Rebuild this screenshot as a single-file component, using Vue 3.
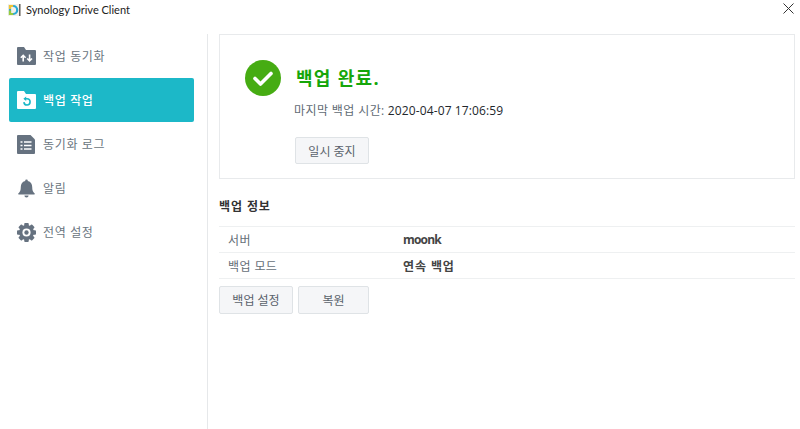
<script setup>
const navItems = [
  { label: '작업 동기화', icon: 'sync' },
  { label: '백업 작업', icon: 'backup', active: true },
  { label: '동기화 로그', icon: 'log' },
  { label: '알림', icon: 'bell' },
  { label: '전역 설정', icon: 'gear' },
]
const rows = [
  { key: '서버', value: 'moonk', latin: true },
  { key: '백업 모드', value: '연속 백업' },
]
</script>

<template>
  <div class="window">
    <header class="titlebar">
      <svg class="logo" width="13" height="12" viewBox="0 0 13 12">
        <rect x="0" y="0" width="13" height="12" fill="#f3f1ea" />
        <path d="M2 2h3.200a4 4 0 0 1 0 8H2z" fill="none" stroke="#27a9d6" stroke-width="2.200" />
        <path d="M2 6.500V10h3.200" fill="none" stroke="#9acb3c" stroke-width="2.200" />
        <path d="M2 5V2h3.200" fill="none" stroke="#f2c230" stroke-width="2.200" />
        <path d="M11.800 0v12" stroke="#444" stroke-width="1.200" />
      </svg>
      <span class="title">Synology Drive Client</span>
      <svg class="close" width="11" height="11" viewBox="0 0 11 11">
        <path d="M0.500 0.500l10 10M10.500 0.500l-10 10" stroke="#333" stroke-width="1" fill="none" />
      </svg>
    </header>

    <div class="body">
      <nav class="sidebar">
        <div v-for="item in navItems" :key="item.label" class="nav-item" :class="{ active: item.active }">
          <span class="nav-icon">
            <svg v-if="item.icon === 'sync'" width="19" height="18" viewBox="0 0 19 18">
              <path d="M0 1a1 1 0 0 1 1-1h6l2 3h9a1 1 0 0 1 1 1v13a1 1 0 0 1-1 1H1a1 1 0 0 1-1-1z" fill="#667280" />
              <path d="M6.200 14.500V8.500M3.800 10.700l2.400-2.400 2.400 2.400M12.600 7.500v6M10.200 11.500l2.400 2.400 2.400-2.400" stroke="#fff" stroke-width="1.600" fill="none" />
            </svg>
            <svg v-else-if="item.icon === 'backup'" width="19" height="18" viewBox="0 0 19 18">
              <path d="M0 1a1 1 0 0 1 1-1h6l2 3h9a1 1 0 0 1 1 1v13a1 1 0 0 1-1 1H1a1 1 0 0 1-1-1z" fill="#fff" />
              <path d="M7.500 7.800h2.500a3.100 3.100 0 1 1-3.100 3.300" stroke="#1cb8c8" stroke-width="1.600" fill="none" />
              <path d="M9.200 5.600L6.400 7.800l2.800 2.200z" fill="#1cb8c8" />
            </svg>
            <svg v-else-if="item.icon === 'log'" width="18" height="19" viewBox="0 0 18 19">
              <path d="M0 1a1 1 0 0 1 1-1h12.500L18 4.500V18a1 1 0 0 1-1 1H1a1 1 0 0 1-1-1z" fill="#667280" />
              <path d="M3.500 7h2M7 7h7.500M3.500 10.500h2M7 10.500h7.500M3.500 14h2M7 14h7.500" stroke="#fff" stroke-width="1.700" fill="none" />
            </svg>
            <svg v-else-if="item.icon === 'bell'" width="19" height="19" viewBox="0 0 20 20">
              <path d="M10 0.500a1.400 1.400 0 0 1 1.400 1.500C14.600 2.700 16 5.200 16 8.500c0 3.500.8 5.400 2.600 6.800.4.400.2 1-.4 1H1.800c-.6 0-.8-.6-.4-1C3.200 13.900 4 12 4 8.500c0-3.300 1.400-5.800 4.600-6.500A1.400 1.400 0 0 1 10 .5z" fill="#667280" />
              <path d="M7.800 17.300h4.400a2.200 2.200 0 0 1-4.400 0z" fill="#667280" />
            </svg>
            <svg v-else width="19" height="19" viewBox="0 0 20 20">
              <g fill="#667280">
                <circle cx="10" cy="10" r="7.800" />
                <rect x="7.600" y="0" width="4.800" height="20" rx="1" />
                <rect x="7.600" y="0" width="4.800" height="20" rx="1" transform="rotate(45 10 10)" />
                <rect x="7.600" y="0" width="4.800" height="20" rx="1" transform="rotate(90 10 10)" />
                <rect x="7.600" y="0" width="4.800" height="20" rx="1" transform="rotate(135 10 10)" />
              </g>
              <circle cx="10" cy="10" r="4.300" fill="#fff" />
              <circle cx="10" cy="10" r="2.300" fill="#667280" />
            </svg>
          </span>
          <span class="nav-label">{{ item.label }}</span>
        </div>
      </nav>

      <main class="content">
        <section class="card">
          <div class="status">
            <svg class="check" width="36" height="36" viewBox="0 0 36 36">
              <circle cx="18" cy="18" r="18" fill="#46ac13" />
              <path d="M10 18.500l5.500 5.500L26 13.500" stroke="#fff" stroke-width="3.600" fill="none" stroke-linecap="round" stroke-linejoin="round" />
            </svg>
            <h1 class="status-title">백업 완료.</h1>
          </div>
          <p class="last"><span class="last-key">마지막 백업 시간:</span> <span class="last-value">2020-04-07 17:06:59</span></p>
          <button class="btn pause">일시 중지</button>
        </section>

        <h2 class="heading">백업 정보</h2>
        <div class="table">
          <div v-for="row in rows" :key="row.key" class="row">
            <span class="key">{{ row.key }}</span>
            <span class="value" :class="{ latin: row.latin }">{{ row.value }}</span>
          </div>
        </div>
        <div class="actions">
          <button class="btn settings">백업 설정</button>
          <button class="btn restore">복원</button>
        </div>
      </main>
    </div>
  </div>
</template>

<style>
html, body { margin: 0; background: #fff; }
</style>

<style scoped>
.window {
  width: 800px;
  height: 429px;
  overflow: hidden;
  background: #fff;
  font-family: "Open Sans", "Noto Sans CJK KR", sans-serif;
  display: flex;
  flex-direction: column;
  color: #333;
}
.titlebar {
  height: 34px;
  flex: none;
  display: flex;
  align-items: flex-start;
  padding: 2px 6px 0 8px;
  box-sizing: border-box;
}
.logo { margin-top: 2px; flex: none; }
.title { margin-left: 5px; font-family: "Lato", sans-serif; font-size: 11px; line-height: 16px; color: #222; }
.close { margin-left: auto; margin-top: 1px; }
.body { flex: 1; display: flex; min-height: 0; }
.sidebar {
  width: 208px;
  box-sizing: border-box;
  border-right: 1px solid #e6e8ea;
  padding: 0 13px 0 9px;
  flex: none;
}
.nav-item {
  height: 44px;
  border-radius: 2px;
  display: flex;
  align-items: center;
  padding-left: 8px;
  font-size: 12px;
  color: #6a7580;
}
.nav-item.active { background: #1cb8c8; color: #fff; font-weight: 500; }
.nav-icon { width: 26px; height: 20px; display: flex; align-items: center; flex: none; }
.nav-label { letter-spacing: 0.65px; }
.content { flex: 1; padding-left: 11px; padding-right: 5px; min-width: 0; }
.card {
  height: 145px;
  box-sizing: border-box;
  border: 1px solid #e8eaec;
  padding: 24px 25px 0;
}
.status { display: flex; align-items: center; gap: 15px; height: 38px; }
.check { flex: none; }
.status-title {
  margin: 0 0 2px;
  font-size: 18px;
  font-weight: 700;
  color: #16a60a;
  letter-spacing: 1.3px;
}
.last { margin: 4px 0 0 49px; font-size: 12px; line-height: 20px; }
.last-key { color: #5f6b75; letter-spacing: 0.4px; }
.last-value { color: #22272c; font-weight: 500; letter-spacing: 0.12px; }
.btn {
  box-sizing: border-box;
  height: 28px;
  border: 1px solid #dfe3e6;
  border-radius: 2px;
  background: #f5f6f8;
  color: #5a636c;
  font: inherit;
  font-size: 12px;
  padding: 0;
}
.pause { display: block; width: 74px; height: 27px; margin: 16px 0 0 50px; }
.heading { margin: 21px 0 0; height: 26px; line-height: 14px; font-size: 12px; font-weight: 700; color: #333; letter-spacing: 0.9px; }
.table { border-top: 1px solid #eef0f1; }
.row {
  height: 26px;
  box-sizing: border-box;
  border-bottom: 1px solid #eef0f1;
  display: flex;
  align-items: center;
  font-size: 12px;
}
.key { width: 184px; padding-left: 9px; box-sizing: border-box; color: #666f78; letter-spacing: 0.4px; }
.value { font-weight: 700; color: #444; letter-spacing: 0.9px; }
.value.latin { letter-spacing: -0.8px; }
.actions { display: flex; gap: 5px; margin-top: 7px; }
.settings { width: 74px; }
.restore { width: 71px; }
</style>
